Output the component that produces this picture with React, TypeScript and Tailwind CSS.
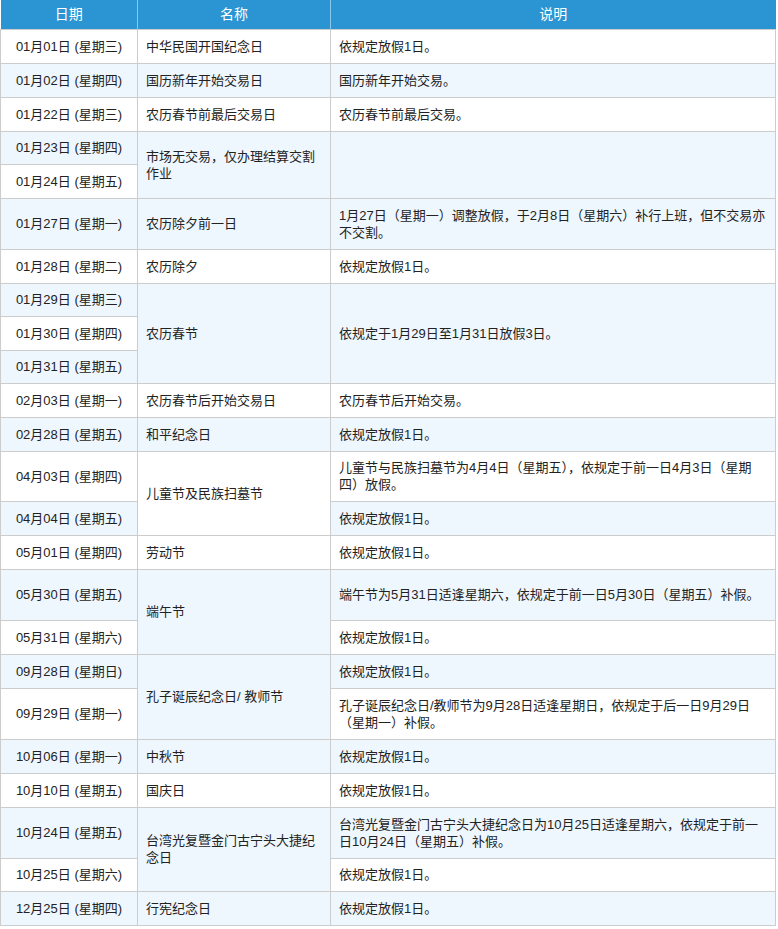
const W = ["三","四","五","六","日","一","二"];
type R = { d: string; n?: [string, number]; e?: [string, number]; h?: number };
const rows: R[] = [
  { d: "01月01日 (星期三)", n: ["中华民国开国纪念日", 1], e: ["依规定放假1日。", 1] },
  { d: "01月02日 (星期四)", n: ["国历新年开始交易日", 1], e: ["国历新年开始交易。", 1] },
  { d: "01月22日 (星期三)", n: ["农历春节前最后交易日", 1], e: ["农历春节前最后交易。", 1] },
  { d: "01月23日 (星期四)", n: ["市场无交易，仅办理结算交割作业", 2], e: ["", 2], h: 33 },
  { d: "01月24日 (星期五)" },
  { d: "01月27日 (星期一)", n: ["农历除夕前一日", 1], e: ["1月27日（星期一）调整放假，于2月8日（星期六）补行上班，但不交易亦不交割。", 1], h: 51 },
  { d: "01月28日 (星期二)", n: ["农历除夕", 1], e: ["依规定放假1日。", 1] },
  { d: "01月29日 (星期三)", n: ["农历春节", 3], e: ["依规定于1月29日至1月31日放假3日。", 3], h: 33 },
  { d: "01月30日 (星期四)" },
  { d: "01月31日 (星期五)", h: 33 },
  { d: "02月03日 (星期一)", n: ["农历春节后开始交易日", 1], e: ["农历春节后开始交易。", 1] },
  { d: "02月28日 (星期五)", n: ["和平纪念日", 1], e: ["依规定放假1日。", 1] },
  { d: "04月03日 (星期四)", n: ["儿童节及民族扫墓节", 2], e: ["儿童节与民族扫墓节为4月4日（星期五），依规定于前一日4月3日（星期四）放假。", 1], h: 50 },
  { d: "04月04日 (星期五)", e: ["依规定放假1日。", 1] },
  { d: "05月01日 (星期四)", n: ["劳动节", 1], e: ["依规定放假1日。", 1] },
  { d: "05月30日 (星期五)", n: ["端午节", 2], e: ["端午节为5月31日适逢星期六，依规定于前一日5月30日（星期五）补假。", 1], h: 51 },
  { d: "05月31日 (星期六)", e: ["依规定放假1日。", 1] },
  { d: "09月28日 (星期日)", n: ["孔子诞辰纪念日/ 教师节", 2], e: ["依规定放假1日。", 1] },
  { d: "09月29日 (星期一)", e: ["孔子诞辰纪念日/教师节为9月28日适逢星期日，依规定于后一日9月29日（星期一）补假。", 1], h: 51 },
  { d: "10月06日 (星期一)", n: ["中秋节", 1], e: ["依规定放假1日。", 1] },
  { d: "10月10日 (星期五)", n: ["国庆日", 1], e: ["依规定放假1日。", 1] },
  { d: "10月24日 (星期五)", n: ["台湾光复暨金门古宁头大捷纪念日", 2], e: ["台湾光复暨金门古宁头大捷纪念日为10月25日适逢星期六，依规定于前一日10月24日（星期五）补假。", 1], h: 51 },
  { d: "10月25日 (星期六)", e: ["依规定放假1日。", 1], h: 33 },
  { d: "12月25日 (星期四)", n: ["行宪纪念日", 1], e: ["依规定放假1日。", 1] },
];
void W;
export default function App() {
  return (
    <div className="w-[778px] bg-white" style={{ fontFamily: '"Liberation Sans","Noto Sans CJK SC",sans-serif' }}>
      <table className="w-[776px] border-collapse text-[13px] leading-[17px] text-[#222] table-fixed">
        <colgroup><col className="w-[137px]" /><col className="w-[193px]" /><col /></colgroup>
        <thead>
          <tr className="h-[29px] bg-[#2b95d3] text-white text-[14px]">
            <th className="font-normal border-r border-[#8cc6ea]">日期</th>
            <th className="font-normal border-r border-[#8cc6ea]">名称</th>
            <th className="font-normal">说明</th>
          </tr>
        </thead>
        <tbody>
          {rows.map((r, i) => (
            <tr key={i} className={i % 2 ? "bg-[#eef6fe]" : "bg-white"} style={{ height: r.h ?? 34 }}>
              <td className="border border-[#cccccc] text-center px-1">{r.d}</td>
              {r.n && <td rowSpan={r.n[1]} className="border border-[#cccccc] px-2 py-1">{r.n[0]}</td>}
              {r.e && <td rowSpan={r.e[1]} className="border border-[#cccccc] px-2 py-1">{r.e[0]}</td>}
            </tr>
          ))}
        </tbody>
      </table>
    </div>
  );
}
